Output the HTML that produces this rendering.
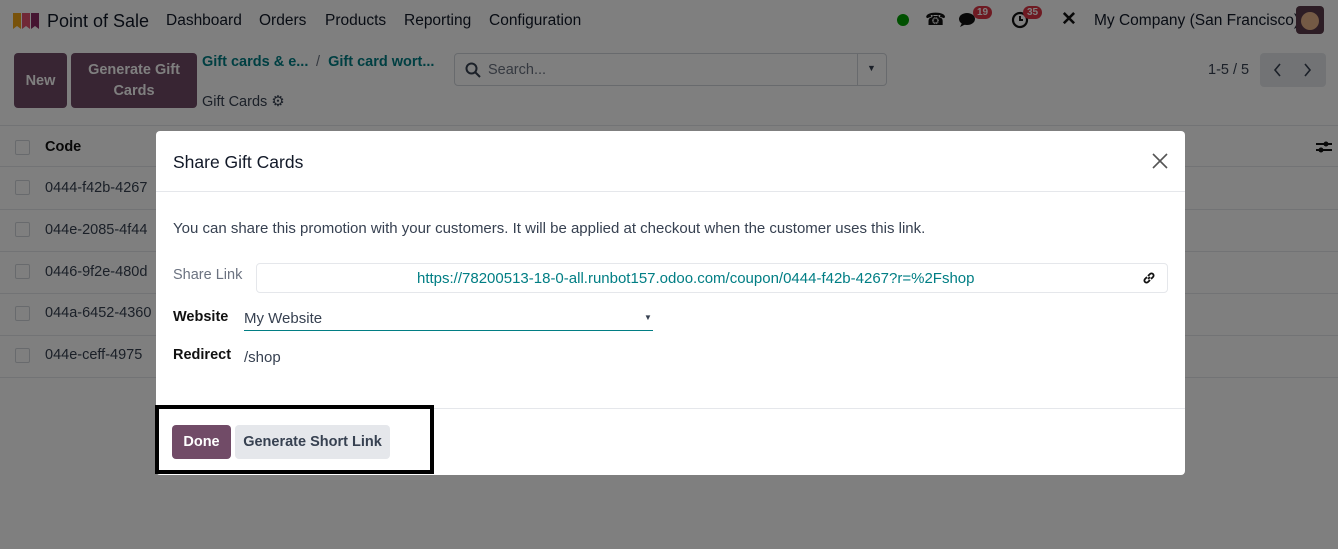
<!DOCTYPE html>
<html><head><meta charset="utf-8"><style>
*{box-sizing:border-box;margin:0;padding:0}
body{width:1338px;height:549px;overflow:hidden;background:#fff;font-family:"Liberation Sans",sans-serif;color:#374151;position:relative;font-size:14.5px}
.a{position:absolute;white-space:nowrap}
.nav{font-size:15.5px;color:#111827}
.btn{background:#714B67;color:#fff;font-weight:bold;border-radius:4px;display:flex;align-items:center;justify-content:center;text-align:center;font-size:14.5px}
.row{position:absolute;left:0;width:1338px;border-bottom:1px solid #e5e7eb;height:42px}
.cb{position:absolute;left:15px;width:15px;height:15px;border:1px solid #d1d5db;border-radius:2px;background:#fff}
.code{position:absolute;left:45px;font-size:14.5px;color:#374151}
.ov{position:absolute;left:0;top:0;width:1338px;height:549px;background:rgba(0,0,0,.5)}
.modal{position:absolute;left:156px;top:131px;width:1029px;height:344px;background:#fff;border-radius:4px}
.badge{position:absolute;background:#dc3545;color:#fff;font-size:10px;border-radius:8px;padding:1px 4px;font-weight:bold}
</style></head><body>
<svg class="a" style="left:12px;top:10px" width="28" height="20" viewBox="0 0 28 20"><path d="M1 3h8v16l-4-3-4 3z" fill="#f0a517"/><path d="M10 3h8v16l-4-3-4 3z" fill="#e0506c"/><path d="M19 3h8v16l-4-3-4 3z" fill="#8a2a63"/></svg>
<div class="a" style="left:47px;top:11px;font-size:18px;color:#111827">Point of Sale</div>
<div class="a nav" style="left:166px;top:12px">Dashboard</div>
<div class="a nav" style="left:259px;top:12px">Orders</div>
<div class="a nav" style="left:325px;top:12px">Products</div>
<div class="a nav" style="left:404px;top:12px">Reporting</div>
<div class="a nav" style="left:489px;top:12px">Configuration</div>
<div class="a" style="left:897px;top:14px;width:12px;height:12px;border-radius:50%;background:#00a000"></div>
<div class="a" style="left:925px;top:10px;font-size:17px;color:#111">☎</div>
<svg class="a" style="left:958px;top:11px" width="22" height="18" viewBox="0 0 22 18"><ellipse cx="9" cy="8" rx="8" ry="6" fill="#111"/><path d="M4 12l-2 4 6-3z" fill="#111"/></svg>
<div class="badge" style="left:973px;top:6px">19</div>
<svg class="a" style="left:1011px;top:11px" width="18" height="18" viewBox="0 0 18 18"><circle cx="9" cy="9" r="7" fill="none" stroke="#111" stroke-width="2.2"/><path d="M9 5v4h3" stroke="#111" stroke-width="2" fill="none"/></svg>
<div class="badge" style="left:1023px;top:6px">35</div>
<div class="a" style="left:1061px;top:8px;font-size:19px;color:#111;font-weight:bold">✕</div>
<div class="a" style="left:1094px;top:12px;font-size:15.5px;color:#111827">My Company (San Francisco)</div>
<div class="a" style="left:1296px;top:6px;width:28px;height:28px;border-radius:4px;background:#5a3b4a"><div style="margin:6px 5px;width:18px;height:18px;background:#e8b48a;border-radius:50%"></div></div>
<div class="a btn" style="left:14px;top:53px;width:53px;height:55px">New</div>
<div class="a btn" style="left:71px;top:53px;width:126px;height:55px;line-height:21px">Generate Gift<br>Cards</div>
<div class="a" style="left:202px;top:54px;color:#017e84;font-weight:bold">Gift cards &amp; e...</div>
<div class="a" style="left:316px;top:54px;color:#017e84;font-weight:bold"><span style="color:#6b7280;font-weight:normal">/ </span>&nbsp;Gift card wort...</div>
<div class="a" style="left:202px;top:92px;color:#374151">Gift Cards <span style="font-size:15px">⚙</span></div>
<div class="a" style="left:454px;top:53px;width:433px;height:33px;border:1px solid #d1d5db;border-radius:4px">
<svg class="a" style="left:10px;top:8px" width="16" height="16" viewBox="0 0 16 16"><circle cx="6.5" cy="6.5" r="5" fill="none" stroke="#374151" stroke-width="2"/><path d="M10 10l5 5" stroke="#374151" stroke-width="2"/></svg><span class="a" style="left:33px;top:8px;color:#6b7280">Search...</span>
<span class="a" style="left:402px;top:0;width:1px;height:31px;background:#d1d5db"></span><span class="a" style="left:412px;top:9px;font-size:9px">▼</span></div>
<div class="a" style="left:1208px;top:62px">1-5 / 5</div>
<div class="a" style="left:1260px;top:53px;width:66px;height:34px;background:#e5e7eb;border-radius:4px"><svg class="a" style="left:0;top:0" width="66" height="34"><path d="M20 11l-5 6 5 6M45 11l5 6-5 6" fill="none" stroke="#374151" stroke-width="1.6"/></svg></div>
<div class="row" style="top:125px;border-top:1px solid #e5e7eb"><div class="cb" style="top:14px"></div><div class="code" style="top:13px;font-weight:bold;color:#111">Code</div>
<svg class="a" style="left:1316px;top:14px" width="16" height="14"><path d="M0 4h16M0 10h16" stroke="#111" stroke-width="2"/><circle cx="10" cy="4" r="2.5" fill="#111"/><circle cx="5" cy="10" r="2.5" fill="#111"/></svg></div>
<div class="row" style="top:168px"><div class="cb" style="top:12px"></div><div class="code" style="top:12px">0444-f42b-4267</div></div>
<div class="row" style="top:210px"><div class="cb" style="top:12px"></div><div class="code" style="top:12px">044e-2085-4f44</div></div>
<div class="row" style="top:252px"><div class="cb" style="top:12px"></div><div class="code" style="top:12px">0446-9f2e-480d</div></div>
<div class="row" style="top:294px"><div class="cb" style="top:12px"></div><div class="code" style="top:11px">044a-6452-4360</div></div>
<div class="row" style="top:336px"><div class="cb" style="top:12px"></div><div class="code" style="top:11px">044e-ceff-4975</div></div>
<div class="ov"></div>
<div class="modal">
<div class="a" style="left:17px;top:21px;font-size:17.5px;color:#111827">Share Gift Cards</div>
<svg class="a" style="left:996px;top:22px" width="16" height="16"><path d="M1 1l14 14M15 1L1 15" stroke="#555" stroke-width="1.6"/></svg>
<div class="a" style="left:0;top:60px;width:1029px;height:1px;background:#e5e7eb"></div>
<div class="a" style="left:17px;top:89px;font-size:15px">You can share this promotion with your customers. It will be applied at checkout when the customer uses this link.</div>
<div class="a" style="left:17px;top:136px;color:#6b7280">Share Link</div>
<div class="a" style="left:100px;top:132px;width:912px;height:30px;border:1px solid #e5e7eb;border-radius:4px"><span class="a" style="left:160px;top:6px;color:#017e84;font-size:15px">https://78200513-18-0-all.runbot157.odoo.com/coupon/0444-f42b-4267?r=%2Fshop</span>
<svg class="a" style="left:885px;top:7px" width="14" height="14" viewBox="0 0 14 14"><path d="M6 8l2-2M5 6L3 8a2 2 0 003 3l2-2M9 8l2-2a2 2 0 00-3-3L6 5" fill="none" stroke="#111" stroke-width="1.8"/></svg></div>
<div class="a" style="left:17px;top:178px;font-weight:bold;color:#111">Website</div>
<div class="a" style="left:88px;top:179px;width:409px;height:21px;border-bottom:1px solid #017e84"><span style="color:#374151;font-size:15px">My Website</span><span class="a" style="left:400px;top:3px;font-size:8px">▼</span></div>
<div class="a" style="left:17px;top:216px;font-weight:bold;color:#111">Redirect</div>
<div class="a" style="left:88px;top:218px;font-size:15px">/shop</div>
<div class="a" style="left:0;top:277px;width:1029px;height:1px;background:#e5e7eb"></div>
<div class="a btn" style="left:16px;top:294px;width:59px;height:34px">Done</div>
<div class="a" style="left:79px;top:294px;width:155px;height:34px;background:#e5e7eb;border-radius:4px;color:#374151;font-weight:bold;text-align:center;line-height:34px">Generate Short Link</div>
</div>
<div class="a" style="left:155px;top:405px;width:279px;height:69px;border:4px solid #000"></div>
</body></html>
